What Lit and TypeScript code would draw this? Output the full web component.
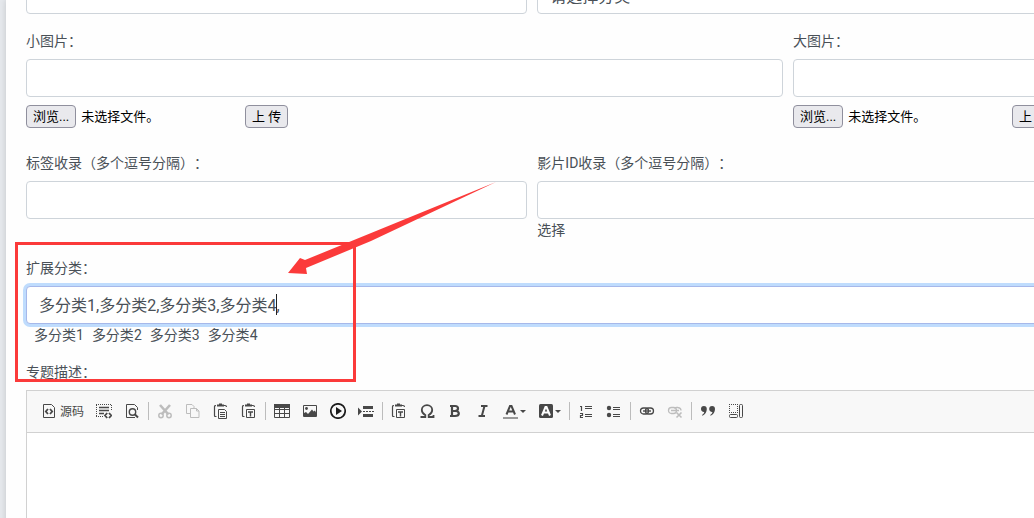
import { LitElement, html, css, svg } from "lit";
import { customElement, property, state } from "lit/decorators.js";

const icons: Record<string, unknown> = {
  source: svg`<path d="M2.500 1.500h8l3 3v10h-11z" fill="none" stroke="#484848"/><path d="M7 6L4.800 8.500 7 11M9 6l2.200 2.500L9 11" fill="none" stroke="#484848" stroke-width="1.800"/>`,
  selectAll: svg`<path d="M0 1.500h16M0 13.500h8" stroke="#484848" stroke-dasharray="1 1"/><path d="M.5 2v12M15.500 2v6" stroke="#484848" stroke-dasharray="1 1"/><path d="M3 4.500h10M3 7.500h10M3 10.500h5" stroke="#484848" stroke-width="1.600"/><path d="M11.200 10L9 12.500l2.200 2.500M13 10l2.200 2.500L13 15" fill="none" stroke="#484848" stroke-width="1.800"/>`,
  preview: svg`<path d="M8 14.500H2.500v-13h8l3 3V7M7 14.500h4" fill="none" stroke="#484848"/><circle cx="8.500" cy="9" r="3.200" fill="none" stroke="#484848" stroke-width="1.400"/><path d="M10.500 11l3.500 3.500" stroke="#484848" stroke-width="2"/>`,
  cut: svg`<path d="M3 2l8.500 9.500M13 2l-8.500 9.500" stroke="#bdbdbd" stroke-width="2.600"/><circle cx="4" cy="12.500" r="2.200" fill="none" stroke="#bdbdbd" stroke-width="1.500"/><circle cx="12" cy="12.500" r="2.200" fill="none" stroke="#bdbdbd" stroke-width="1.500"/>`,
  copy: svg`<path d="M5 10.500H1.500v-9h5.500l2 2V5M5.500 5.500h6l2.500 2.500v6.500H5.500zM11.500 5.500V8H14" fill="none" stroke="#bdbdbd"/>`,
  paste: svg`<path d="M3.500 13.500h-1q-1 0-1-1V3.500q0-1 1.500-1M11 2.500h1q1.500 0 1.500 1.500" fill="none" stroke="#484848" stroke-width="1.200"/><path d="M4 1.500h2V.5h3v1h2v2H4z" fill="#484848"/><path d="M5.500 6.500h6l2 2v7h-8zM7 9.500h5M7 11.500h5M7 13.500h5" fill="none" stroke="#484848"/>`,
  pasteText: svg`<path d="M3.500 13.500h-1q-1 0-1-1V3.500q0-1 1.500-1M11 2.500h1q1.500 0 1.500 1.500" fill="none" stroke="#484848" stroke-width="1.200"/><path d="M4 1.500h2V.5h3v1h2v2H4z" fill="#484848"/><path d="M5.500 6.500h8v8h-8z" fill="none" stroke="#484848"/><path d="M7 9h5M9.500 9v4.500" stroke="#484848" stroke-width="1.400"/>`,
  table: svg`<path d="M.5 1.500h15v13H.5zM.5 6.500h15M.5 10.500h15M5.500 5v9M10.500 5v9" fill="none" stroke="#484848"/><path d="M0 1h16v4H0z" fill="#484848"/>`,
  image: svg`<path d="M1.500 2.500h13v11h-13z" fill="none" stroke="#484848"/><circle cx="4.500" cy="5.500" r="1.400" fill="#484848"/><path d="M2 13v-3l2-1 2 2 4-4.500 1.500 2L13 7.500l1 2V13z" fill="#484848"/>`,
  media: svg`<circle cx="8" cy="8" r="7.200" fill="none" stroke="#1c1c1c" stroke-width="1.700"/><path d="M6 4l6 4-6 4z" fill="#1c1c1c"/>`,
  pageBreak: svg`<path d="M0 4.500l4 4L0 12.500z" fill="#484848"/><path d="M5 3h10v3H5zM5 11h10v3H5z" fill="#484848"/><path d="M5 8.500h11" stroke="#484848" stroke-dasharray="2 1"/>`,
  omega: svg`<path d="M1.500 14h4.800v-2C3.500 10.500 2.800 9 2.800 7 2.800 4.200 5 2.200 8 2.200s5.200 2 5.200 4.800c0 2-.7 3.500-3.500 5v2h4.800v-2" fill="none" stroke="#484848" stroke-width="1.800"/>`,
  bold: svg`<path d="M5 3v10M3 3h5q3 0 3 2.400T8 8H5M8 8q3.800 0 3.800 2.500T8 13H3" fill="none" stroke="#484848" stroke-width="2.200"/>`,
  italic: svg`<path d="M6 3h6.500M3.500 13H10M9.500 3L6.800 13" fill="none" stroke="#484848" stroke-width="2"/>`,
  color: svg`<path d="M3.500 11.500L7 3h1.500l3.500 8.500M5 8.500h6" fill="none" stroke="#484848" stroke-width="2"/><path d="M0 15h15" stroke="#999" stroke-width="2"/>`,
  background: svg`<rect x="1" y="1" width="14" height="14" rx="1.500" fill="#484848"/><path d="M4 12.500L7.500 4h1l3.500 8.500M5.500 9.500h5" fill="none" stroke="#fff" stroke-width="2"/>`,
  numbered: svg`<path d="M2 3.500h1.500V8M2 10.500h2.500v2H2.500v2H5" fill="none" stroke="#484848" stroke-width="1.200"/><path d="M7 3.500h7M7 5.500h7M7 11.500h7M7 13.500h7" stroke="#484848"/>`,
  bulleted: svg`<circle cx="3" cy="5" r="2.200" fill="#484848"/><circle cx="3" cy="12" r="2.200" fill="#484848"/><path d="M7 4.500h7M7 6.500h7M7 11.500h7M7 13.500h7" stroke="#484848"/>`,
  link: svg`<rect x="1.500" y="5" width="8" height="6" rx="3" fill="none" stroke="#484848" stroke-width="1.300"/><rect x="6.500" y="5" width="8" height="6" rx="3" fill="none" stroke="#484848" stroke-width="1.300"/><path d="M4 8h8" stroke="#484848" stroke-width="1.400"/>`,
  unlink: svg`<rect x="1.500" y="4.500" width="8" height="6" rx="3" fill="none" stroke="#bdbdbd" stroke-width="1.300"/><path d="M7 5q2-1 4-.5 3 .5 3 3M4 7.500h8" fill="none" stroke="#bdbdbd" stroke-width="1.300"/><path d="M9.500 9.500l5 5M14.500 9.500l-5 5" stroke="#bdbdbd" stroke-width="1.600"/>`,
  quote: svg`<path d="M1 6a2.900 2.900 0 1 1 5.800 0c0 3-1.500 5.200-4.300 6.800l-.5-.8C3.500 11 4.200 10 4.200 8.900 2.300 9 1 7.800 1 6zM9.200 6A2.900 2.900 0 1 1 15 6c0 3-1.500 5.200-4.300 6.800l-.5-.8c1.500-1 2.200-2 2.200-3.100C10.500 9 9.200 7.800 9.200 6z" fill="#484848"/>`,
  blocks: svg`<path d="M1 1.500h9M1 9.500h9M1.500 1v9M9.500 1v9" stroke="#484848" stroke-dasharray="1 1"/><rect x="1.500" y="11.500" width="8" height="3" rx="1" fill="none" stroke="#484848"/><rect x="11.500" y="1.500" width="3" height="13" rx="1" fill="none" stroke="#484848"/>`,
};

interface Tool {
  icon: string;
  title: string;
  text?: string;
  menu?: boolean;
  disabled?: boolean;
}

const TOOLS: Tool[][] = [
  [
    { icon: "source", title: "源码", text: "源码" },
    { icon: "selectAll", title: "全选" },
    { icon: "preview", title: "预览" },
  ],
  [
    { icon: "cut", title: "剪切", disabled: true },
    { icon: "copy", title: "复制", disabled: true },
    { icon: "paste", title: "粘贴" },
    { icon: "pasteText", title: "粘贴为文本" },
  ],
  [
    { icon: "table", title: "表格" },
    { icon: "image", title: "图像" },
    { icon: "media", title: "视频" },
    { icon: "pageBreak", title: "分页符" },
  ],
  [
    { icon: "pasteText", title: "粘贴纯文本" },
    { icon: "omega", title: "特殊符号" },
    { icon: "bold", title: "加粗" },
    { icon: "italic", title: "倾斜" },
    { icon: "color", title: "文本颜色", menu: true },
    { icon: "background", title: "背景颜色", menu: true },
  ],
  [
    { icon: "numbered", title: "编号列表" },
    { icon: "bulleted", title: "项目列表" },
  ],
  [
    { icon: "link", title: "超链接" },
    { icon: "unlink", title: "取消超链接", disabled: true },
  ],
  [
    { icon: "quote", title: "块引用" },
    { icon: "blocks", title: "显示区块" },
  ],
];

@customElement("rich-editor")
class RichEditor extends LitElement {
  static styles = css`
    :host { display: block; border: 1px solid #d1d1d1; background: #fff; }
    .toolbar { display: flex; padding: 6px 6px 7px; background: #f8f8f8; border-bottom: 1px solid #d1d1d1; }
    .group { display: flex; align-items: center; height: 28px; }
    .group + .group::before { content: ""; width: 1px; height: 18px; margin: 0 2px; background: #bcbcbc; }
    .tool { display: flex; align-items: center; box-sizing: border-box; height: 28px; padding: 0 6px;
      border: 0; background: none; color: #484848; font: 12px/16px "Noto Sans CJK SC", sans-serif; }
    .tool:first-child:has(.caption) { padding-left: 8px; }
    .icon { width: 16px; height: 16px; flex: none; }
    .caption { margin-left: 3px; }
    .menu { margin-left: 1px; border: 3px solid transparent; border-top-color: #484848; border-bottom: 0; }
    .area { height: 280px; outline: none; }
  `;
  render() {
    return html`
      <div class="toolbar" role="toolbar">
        ${TOOLS.map((g) => html`<div class="group">${g.map((t) => html`
          <button class="tool" type="button" title=${t.title} ?disabled=${t.disabled}>
            <svg class="icon" viewBox="0 0 16 16" aria-hidden="true">${icons[t.icon]}</svg>
            ${t.text ? html`<span class="caption">${t.text}</span>` : ""}
            ${t.menu ? html`<span class="menu"></span>` : ""}
          </button>`)}</div>`)}
      </div>
      <div class="area" contenteditable="true" role="textbox" aria-label="专题描述"></div>`;
  }
}

@customElement("picture-field")
class PictureField extends LitElement {
  @property() label = "";
  static styles = css`
    :host { display: block; }
    .label { display: block; margin-bottom: 6px; font-size: 14px; line-height: 23px; }
    .text { display: block; box-sizing: border-box; width: 100%; height: 38px; padding: 0 12px; border: 1px solid #ced4da; border-radius: 4px; background: #fff; }
    .upload { display: flex; margin: 8px 0; color: #000; font-size: 13px; line-height: 17px; }
    .picker { display: flex; align-items: center; gap: 5px; width: 219px; }
    .file { position: absolute; width: 1px; height: 1px; opacity: 0; }
    .button { box-sizing: border-box; height: 23px; padding: 2px 6px; border: 1px solid #8f8f9d; border-radius: 4px; background: #e9e9ed; color: #000; font: inherit; }
  `;
  render() {
    return html`
      <label class="label" for="path">${this.label}</label>
      <input class="text" id="path" type="text">
      <div class="upload">
        <div class="picker">
          <input class="file" id="file" type="file">
          <label class="button" for="file">浏览...</label>
          <span>未选择文件。</span>
        </div>
        <button class="button" type="button">上 传</button>
      </div>`;
  }
}

@customElement("app-root")
class AppRoot extends LitElement {
  @state() private extended = "多分类1,多分类2,多分类3,多分类4,";

  static styles = css`
    :host { display: block; height: 100vh; overflow: hidden; box-sizing: border-box; padding-left: 6px; background: #e5e8ec;
      color: #495057; font-family: Roboto, "Noto Sans CJK SC", sans-serif; font-size: 14px; line-height: 23px; text-spacing-trim: space-all; }
    .card { position: relative; min-width: 1564px; min-height: 100%; box-sizing: border-box; padding: 0 20px; background: #fefefe; box-shadow: 0 0 6px rgba(0, 0, 0, 0.15); display: flow-root; }
    .form { display: grid; grid-template-columns: repeat(12, 1fr); gap: 16px 10px; margin-top: -24px; }
    .third { grid-column: span 4; }
    .half { grid-column: span 6; }
    .full { grid-column: span 12; }
    .rest { grid-column: span 8; }
    .label { display: block; margin-bottom: 6px; }
    .control { display: block; box-sizing: border-box; width: 100%; height: 38px; padding: 0 12px; border: 1px solid #ced4da;
      border-radius: 4px; background: #fff; color: #495057; font: inherit; font-size: 16px; outline: none; }
    .control.select { padding: 2px 8px 0; }
    .control.active { padding-bottom: 2px; border-color: #a6b8ea; box-shadow: 0 0 0 3px #bfdcfd; }
    .link { color: inherit; text-decoration: none; }
    .hint { display: block; line-height: 22px; }
    .choices { display: flex; gap: 8px; padding: 1px 0 0 8px; line-height: 20px; }
    .marks { position: absolute; left: 0; top: 170px; width: 500px; height: 220px; pointer-events: none; }
  `;

  private onInput(e: Event) {
    this.extended = (e.target as HTMLInputElement).value;
  }

  render() {
    return html`
      <main class="card">
        <form class="form">
          <div class="third">
            <input class="control" type="text" aria-label="名称">
          </div>
          <div class="rest">
            <select class="control select" aria-label="分类"><option>请选择分类</option></select>
          </div>
          <picture-field class="half" label="小图片："></picture-field>
          <picture-field class="half" label="大图片："></picture-field>
          <div class="third">
            <label class="label" for="tags">标签收录（多个逗号分隔）：</label>
            <input class="control" id="tags" type="text">
          </div>
          <div class="rest">
            <label class="label" for="ids">影片ID收录（多个逗号分隔）：</label>
            <input class="control" id="ids" type="text">
            <a class="link hint" href="#">选择</a>
          </div>
          <div class="full">
            <label class="label" for="extended">扩展分类：</label>
            <input class="control active" id="extended" type="text" .value=${this.extended} @input=${this.onInput}>
            <div class="choices">
              ${[1, 2, 3, 4].map((n) => html`<a class="link" href="#">多分类${n}</a>`)}
            </div>
          </div>
          <div class="full">
            <span class="label">专题描述：</span>
            <rich-editor></rich-editor>
          </div>
        </form>
        <svg class="marks" viewBox="0 0 500 220" aria-hidden="true">
          <rect x="10.500" y="73.500" width="338" height="137" fill="none" stroke="#fb3a3a" stroke-width="3"/>
          <path d="M490 12L299 90l-5-2-12 15 19 1-1-6 65-27z" fill="#fb3a3a"/>
          <path d="M270.500 124v21" stroke="#222"/>
        </svg>
      </main>`;
  }
}
